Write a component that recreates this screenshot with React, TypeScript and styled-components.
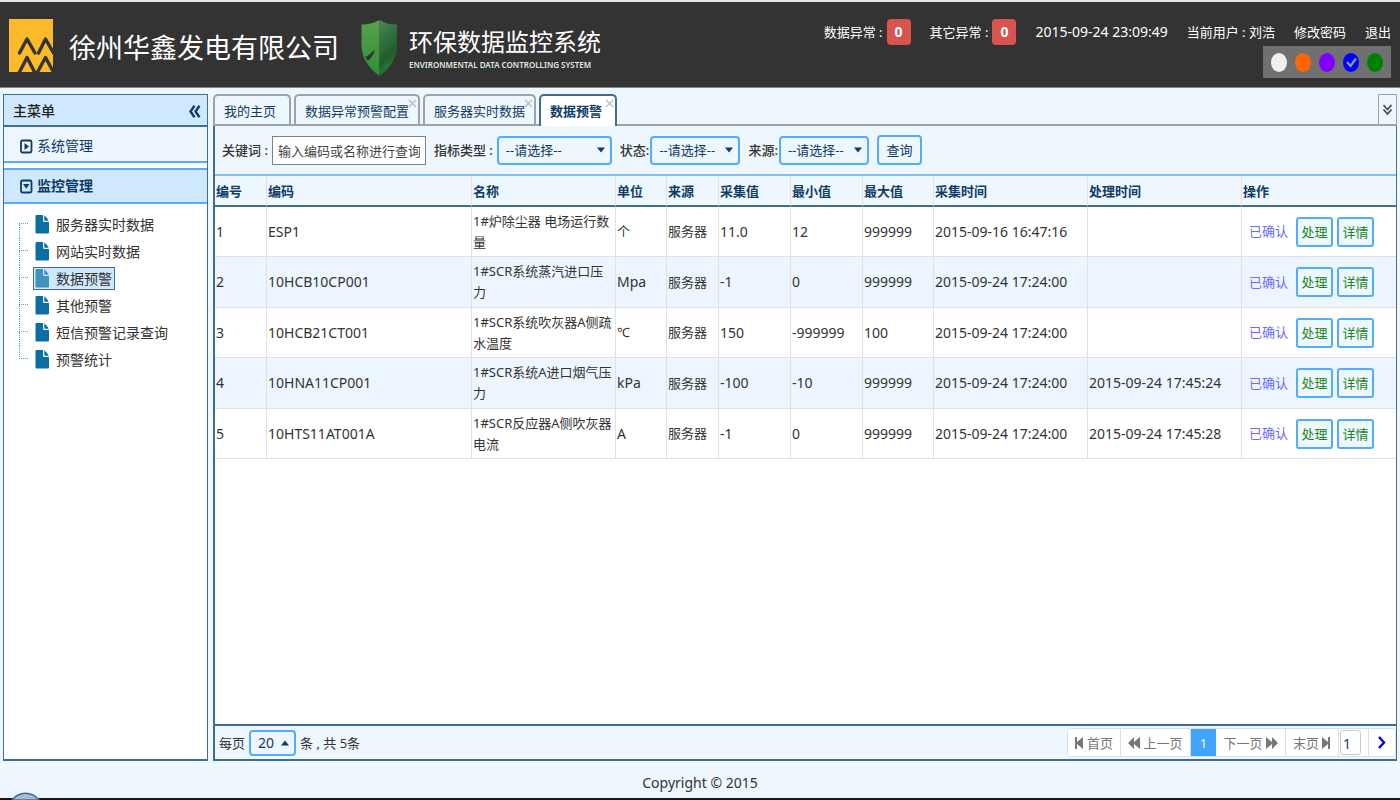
import React, { useState } from "react";
import styled, { createGlobalStyle, css } from "styled-components";

const color = {
  page: "#eef6fe",
  pale: "#edf6fe",
  blue: "#d0e8fe",
  line: "#3f6d94",
  bright: "#52aefc",
  navy: "#0f3c66",
  grey: "#9ba3ab",
  cell: "#dfe1e3",
};

const GlobalStyle = createGlobalStyle`
  *, *::before, *::after { box-sizing: border-box; }
  body { margin: 0; background: ${color.page}; }
  body, button, input, select {
    font-family: "Noto Sans", "Noto Sans CJK SC", sans-serif;
    font-size: 13px;
    line-height: 20px;
    color: #333;
  }
  a { color: inherit; text-decoration: none; }
  h1, h2, h3, p, ul { margin: 0; padding: 0; font-weight: 400; }
  ul { list-style: none; }
`;

const Page = styled.div`
  display: flex;
  flex-direction: column;
  min-height: 100vh;
  overflow: hidden;
`;

const Header = styled.header`
  display: flex;
  justify-content: space-between;
  height: 88px;
  padding-left: 8px;
  background: #333;
  border-top: 2px solid #dfe6e6;
  border-bottom: 1px solid #83878a;
`;

const Brand = styled.div`
  display: flex;
  align-items: center;
  padding-top: 6px;
`;

const CompanyName = styled.h1`
  margin: 0 22px 0 16px;
  font-size: 27px;
  line-height: 40px;
  color: #fff;
  white-space: nowrap;
`;

const SystemName = styled.div`
  display: flex;
  flex-direction: column;
  margin-left: 11px;
  color: #fff;
  white-space: nowrap;
`;

const SystemTitle = styled.h2`
  font-size: 24px;
  line-height: 34px;
`;

const SystemSubtitle = styled.p`
  font-size: 8px;
  line-height: 12px;
  font-weight: 600;
  color: #dfe9df;
`;

const HeaderSide = styled.div`
  display: flex;
  flex-direction: column;
  align-items: flex-end;
  padding: 15px 9px 0 0;
`;

const StatusRow = styled.div`
  display: flex;
  align-items: center;
  gap: 19px;
  height: 29px;
  color: #fff;
  white-space: nowrap;
`;

const Alert = styled.span`
  display: flex;
  align-items: center;
  gap: 4px;
`;

const Badge = styled.b`
  width: 24px;
  height: 26px;
  border-radius: 4px;
  background: #d9534f;
  font-size: 14px;
  line-height: 25px;
  text-align: center;
`;

const Clock = styled.time`
  font-size: 14px;
`;

const Themes = styled.div`
  display: flex;
  align-items: center;
  gap: 8px;
  height: 32px;
  padding: 0 8px;
  background: #707070;
`;

const ThemeDot = styled.label<{ $color: string }>`
  position: relative;
  display: flex;
  width: 16px;
  height: 19px;
  border-radius: 50%;
  background: ${(p) => p.$color};
  input {
    appearance: none;
    width: 16px;
    height: 19px;
    margin: 0;
    border-radius: 50%;
  }
  svg {
    position: absolute;
    inset: 4px 3px;
    pointer-events: none;
  }
`;

const Body = styled.div`
  display: flex;
  flex: 1;
  gap: 5px;
  padding: 6px 3px 0;
`;

const Sidebar = styled.nav`
  flex: 0 0 205px;
  display: flex;
  flex-direction: column;
  background: #fff;
  border: 2px solid ${color.line};
  border-width: 1px 1px 2px;
`;

const SidebarTitle = styled.div`
  display: flex;
  align-items: center;
  justify-content: space-between;
  height: 32px;
  padding: 2px 6px 0 9px;
  background: ${color.blue};
  border-bottom: 2px solid ${color.line};
  font-size: 14px;
  font-weight: 500;
  color: #222;
`;

const IconButton = styled.button`
  display: flex;
  align-items: center;
  justify-content: center;
  padding: 0;
  border: 0;
  background: none;
  cursor: pointer;
`;

const Group = styled.button<{ $open?: boolean }>`
  display: flex;
  align-items: center;
  gap: 4px;
  height: 36px;
  padding: ${(p) => (p.$open ? 0 : 4)}px 15px 0;
  border: 0 solid ${color.bright};
  border-bottom-width: 2px;
  border-top-width: ${(p) => (p.$open ? 2 : 0)}px;
  margin-bottom: ${(p) => (p.$open ? 7 : 5)}px;
  background: ${(p) => (p.$open ? color.blue : color.pale)};
  font-size: 14px;
  font-weight: ${(p) => (p.$open ? 700 : 400)};
  color: ${color.navy};
`;

const Tree = styled.ul`
  padding-left: 15px;
`;

const treeLine = "1px dotted #4fa3cf";

const TreeItem = styled.li`
  position: relative;
  height: 27px;
  padding: 2px 0 2px 14px;
  &::before {
    content: "";
    position: absolute;
    left: 0;
    top: 0;
    width: 9px;
    height: 13px;
    border-left: ${treeLine};
    border-bottom: ${treeLine};
  }
  &:first-child::before { border-left: 0; }
  &:not(:last-child)::after {
    content: "";
    position: absolute;
    left: 0;
    top: 13px;
    bottom: 0;
    border-left: ${treeLine};
  }
`;

const TreeLink = styled.a<{ $active?: boolean }>`
  display: inline-flex;
  align-items: center;
  gap: 7px;
  height: 23px;
  padding: 0 2px 0 1px;
  border: 1px solid transparent;
  font-size: 14px;
  white-space: nowrap;
  svg { color: #0b6fa4; }
  ${(p) =>
    p.$active &&
    css`
      background: ${color.blue};
      border-color: ${color.line};
      svg { color: #3f93bf; }
    `}
`;

const Main = styled.main`
  flex: 1;
  min-width: 0;
  display: flex;
  flex-direction: column;
`;

const TabBar = styled.div`
  display: flex;
  gap: 3px;
  height: 32px;
  border-bottom: 2px solid ${color.grey};
`;

const Tab = styled.div<{ $active?: boolean }>`
  position: relative;
  display: flex;
  min-width: 78px;
  height: ${(p) => (p.$active ? 32 : 30)}px;
  padding-right: 9px;
  border: 2px solid ${(p) => (p.$active ? color.line : color.grey)};
  border-bottom: 0;
  border-radius: 5px 5px 0 0;
  background: ${(p) => (p.$active ? "#fff" : color.page)};
`;

const TabLabel = styled.button<{ $active?: boolean }>`
  height: 28px;
  padding: 1px 0 0 9px;
  border: 0;
  background: none;
  font-weight: ${(p) => (p.$active ? 700 : 400)};
  color: ${color.navy};
  white-space: nowrap;
`;

const TabClose = styled(IconButton)`
  position: absolute;
  top: 3px;
  right: 1px;
  width: 9px;
  height: 9px;
`;

const TabMenu = styled(IconButton)`
  width: 19px;
  height: 30px;
  margin-left: auto;
  border: 1px solid ${color.grey};
  border-bottom: 0;
`;

const Panel = styled.section`
  flex: 1;
  display: flex;
  flex-direction: column;
  background: #fff;
  border: 0 solid ${color.line};
  border-width: 0 1px 2px 2px;
`;

const Filters = styled.form`
  display: flex;
  align-items: center;
  gap: 8px;
  height: 50px;
  padding: 0 7px;
  background: ${color.page};
  border-bottom: 2px solid #7cc0fb;
`;

const Field = styled.label<{ $gap: number }>`
  display: flex;
  align-items: center;
  gap: ${(p) => p.$gap}px;
  font-weight: 500;
  white-space: nowrap;
`;

const TextInput = styled.input`
  width: 154px;
  height: 29px;
  padding: 2px 5px 0;
  border: 1px solid #7d8287;
  background: #fff;
  outline: 0;
  &::placeholder { color: #444; opacity: 1; }
`;

const SelectBox = styled.span<{ $width: number; $height?: number }>`
  position: relative;
  display: inline-flex;
  width: ${(p) => p.$width}px;
  height: ${(p) => p.$height ?? 29}px;
  svg {
    position: absolute;
    right: 7px;
    top: 50%;
    margin-top: -3px;
    pointer-events: none;
  }
`;

const Select = styled.select`
  appearance: none;
  width: 100%;
  padding: 0 7px;
  border: 2px solid ${color.bright};
  border-radius: 4px;
  background: ${color.page};
  color: ${color.navy};
`;

const Button = styled.button<{ $action?: boolean }>`
  width: ${(p) => (p.$action ? 37 : 45)}px;
  height: 30px;
  padding: 0;
  border: 2px solid ${color.bright};
  border-radius: ${(p) => (p.$action ? 3 : 4)}px;
  background: ${color.page};
  color: ${(p) => (p.$action ? "#1b861b" : color.navy)};
`;

const Table = styled.table`
  width: 100%;
  table-layout: fixed;
  border-collapse: separate;
  border-spacing: 0;
  th, td {
    padding: 0 1px;
    border-right: 1px solid ${color.cell};
    text-align: left;
  }
  th:last-child, td:last-child { border-right: 0; }
  th {
    height: 31px;
    background: ${color.page};
    border-bottom: 2px solid ${color.line};
    font-weight: 700;
    color: ${color.navy};
  }
  td {
    height: 50px;
    border-bottom: 1px solid ${color.cell};
    line-height: 21px;
  }
  tbody tr:nth-child(even) { background: ${color.pale}; }
  tbody tr:nth-child(even) td { height: 51px; }
`;

const Value = styled.span`
  font-size: 14px;
  white-space: nowrap;
`;

const Actions = styled.div`
  display: flex;
  align-items: center;
  gap: 4px;
  padding-left: 6px;
`;

const Confirmed = styled.span`
  margin-right: 4px;
  color: #6a6aff;
`;

const PanelFooter = styled.div`
  display: flex;
  align-items: center;
  justify-content: space-between;
  height: 35px;
  margin-top: auto;
  padding: 0 0 0 4px;
  background: ${color.page};
  border-top: 2px solid ${color.line};
`;

const PageSize = styled.div`
  display: flex;
  align-items: center;
  gap: 4px;
  select { font-size: 14px; }
`;

const Pager = styled.div`
  display: flex;
  height: 29px;
  border: 1px solid #dcdfe2;
  border-radius: 4px;
  background: #fff;
  overflow: hidden;
`;

const PagerButton = styled.button<{ $width: number; $current?: boolean }>`
  display: flex;
  align-items: center;
  justify-content: center;
  gap: 3px;
  width: ${(p) => p.$width}px;
  padding: 0;
  border: 0;
  border-right: ${(p) => (p.$current ? 0 : 1)}px solid #dcdfe2;
  background: ${(p) => (p.$current ? "#40a4fc" : "#fff")};
  color: ${(p) => (p.$current ? "#fff" : "#777")};
  white-space: nowrap;
  &:last-child { border-right: 0; }
`;

const PageInputCell = styled.div`
  display: flex;
  align-items: center;
  width: 30px;
  padding-left: 1px;
  border-right: 1px solid #dcdfe2;
`;

const PageInput = styled.input`
  width: 21px;
  height: 25px;
  padding: 2px 2px 0;
  border: 1px solid #ccc;
  border-radius: 3px;
  font-size: 14px;
  color: ${color.navy};
`;

const Copyright = styled.footer`
  position: relative;
  height: 39px;
  padding-top: 12px;
  border-bottom: 2px solid #15171c;
  font-size: 14px;
  text-align: center;
`;

const StartOrb = styled.svg`
  position: absolute;
  left: 11px;
  bottom: -2px;
`;

const LogoMark = styled.svg`
  margin-bottom: 4px;
`;

const CompanyLogo = () => (
  <LogoMark width="45" height="53" viewBox="0 0 45 53" aria-hidden="true">
    <rect x="1" width="44" height="53" fill="#fbba2b" />
    <g fill="none" stroke="#333" strokeWidth="3.400" strokeLinejoin="round">
      <path d="M11.500 34 19 20l8 14" strokeLinecap="round" />
      <path d="M30.500 34 37.500 20l8 14" strokeLinecap="round" />
      <path d="M11 54 19 38.500 27 54M29 54 37.500 38.500 46 54" />
    </g>
  </LogoMark>
);

const Shield = () => (
  <svg width="37" height="57" viewBox="0 0 37 57" aria-hidden="true">
    <defs>
      <linearGradient id="shieldLeft" x1="0" y1="0" x2="0" y2="1">
        <stop offset="0" stopColor="#5aa04f" />
        <stop offset="1" stopColor="#2c9135" />
      </linearGradient>
      <linearGradient id="shieldRight" x1="0" y1="0" x2="0.300" y2="1">
        <stop offset="0" stopColor="#4c8657" />
        <stop offset="0.500" stopColor="#2c6a38" />
        <stop offset="1" stopColor="#1f6129" />
      </linearGradient>
    </defs>
    <path d="M18.500 1C13 4 7 5.500 .5 5.500v21c0 13 8 23 18 30.500z" fill="url(#shieldLeft)" />
    <path d="M18.500 1c5 3 11 4.500 17.500 4.500v21c0 13-7.500 23-17.500 30.500z" fill="url(#shieldRight)" />
    <path d="M18.500 38 36 23v9L18.500 48z" fill="#1d5529" opacity=".45" />
    <path d="M18.500 50 33 40c-3 7-8 12-14.500 17z" fill="#2f8a39" opacity=".4" />
    <path d="M4 38c4-1 6-5 10-7-1 3-2 6-7 11z" fill="#333" />
  </svg>
);

const Arrow = ({ up }: { up?: boolean }) => (
  <svg width="8" height="6" viewBox="0 0 8 6" aria-hidden="true">
    <path d={up ? "M0 5.500h8L4 .5z" : "M0 .5h8L4 5.500z"} fill={color.navy} />
  </svg>
);

const GroupIcon = ({ open }: { open?: boolean }) => (
  <svg width="14" height="15" viewBox="0 0 14 15" aria-hidden="true">
    <rect x="2" y="1.500" width="10.500" height="12" rx="1.500" fill="none" stroke={color.navy} strokeWidth="1.800" />
    <path d={open ? "M4 5h6.500l-3.250 4.800z" : "M5.500 4v7l4.500-3.500z"} fill={color.navy} />
  </svg>
);

const FileIcon = () => (
  <svg width="14" height="19" viewBox="0 0 14 19" aria-hidden="true">
    <path
      d="M1.500 0H8v5.500q0 1.500 1.500 1.500H14v10.500q0 1-1 1H1.500q-1 0-1-1V1q0-1 1-1zM9.300.3q2.700 2.200 4.400 5.400H9.300z"
      fill="currentColor"
    />
  </svg>
);

const Chevrons = ({ down }: { down?: boolean }) => (
  <svg width="13" height="13" viewBox="0 0 13 13" fill="none" aria-hidden="true">
    {down ? (
      <path d="M2.500 2 6.500 6.500 10.500 2M2.500 6.500 6.500 11 10.500 6.500" stroke="#444" strokeWidth="1.600" />
    ) : (
      <path d="M6.500 .8 2.500 6.500l4 5.700M11.500 .8 7.500 6.500l4 5.700" stroke={color.navy} strokeWidth="2.400" />
    )}
  </svg>
);

const Cross = () => (
  <svg width="9" height="9" viewBox="0 0 9 9" aria-hidden="true">
    <path d="M1 1l7 7M8 1 1 8" stroke="#b9bec4" strokeWidth="1.400" />
  </svg>
);

const pagerShapes = {
  first: { w: 9, d: "M0 0h2v5L8 0v12L2 7v5H0z" },
  prev: { w: 12, d: "M6 0v5l6-5v12L6 7v5L0 6z" },
  next: { w: 12, d: "M6 0v5L0 0v12l6-5v5l6-6z" },
  last: { w: 9, d: "M8 0H6v5L0 0v12l6-5v5h2z" },
};

const PagerIcon = ({ kind }: { kind: keyof typeof pagerShapes }) => (
  <svg width={pagerShapes[kind].w} height="12" viewBox={`0 0 ${pagerShapes[kind].w} 12`} aria-hidden="true">
    <path d={pagerShapes[kind].d} fill="#777" />
  </svg>
);

const themes = [
  { name: "白色", value: "#f0f0f0" },
  { name: "橙色", value: "#ff6600" },
  { name: "紫色", value: "#8000ff" },
  { name: "蓝色", value: "#0000ff" },
  { name: "绿色", value: "#008000" },
];

const menu = ["服务器实时数据", "网站实时数据", "数据预警", "其他预警", "短信预警记录查询", "预警统计"];
const tabs = ["我的主页", "数据异常预警配置", "服务器实时数据", "数据预警"];
const widths = [52, 205, 144, 51, 52, 72, 72, 71, 154, 154];
const columns = ["编号", "编码", "名称", "单位", "来源", "采集值", "最小值", "最大值", "采集时间", "处理时间", "操作"];

const rows = [
  ["1", "ESP1", "1#炉除尘器 电场运行数量", "个", "服务器", "11.0", "12", "999999", "2015-09-16 16:47:16", ""],
  ["2", "10HCB10CP001", "1#SCR系统蒸汽进口压力", "Mpa", "服务器", "-1", "0", "999999", "2015-09-24 17:24:00", ""],
  ["3", "10HCB21CT001", "1#SCR系统吹灰器A侧疏水温度", "℃", "服务器", "150", "-999999", "100", "2015-09-24 17:24:00", ""],
  ["4", "10HNA11CP001", "1#SCR系统A进口烟气压力", "kPa", "服务器", "-100", "-10", "999999", "2015-09-24 17:24:00", "2015-09-24 17:45:24"],
  ["5", "10HTS11AT001A", "1#SCR反应器A侧吹灰器电流", "A", "服务器", "-1", "0", "999999", "2015-09-24 17:24:00", "2015-09-24 17:45:28"],
];

const isLatin = (text: string) => /^[\x20-\x7e]+$/.test(text);

const Choice = ({ label, gap, width }: { label: string; gap: number; width: number }) => (
  <Field $gap={gap}>
    {label}
    <SelectBox $width={width}>
      <Select>
        <option>--请选择--</option>
      </Select>
      <Arrow />
    </SelectBox>
  </Field>
);

export default function App() {
  const [theme, setTheme] = useState("蓝色");
  return (
    <Page>
      <GlobalStyle />
      <Header>
        <Brand>
          <CompanyLogo />
          <CompanyName>徐州华鑫发电有限公司</CompanyName>
          <Shield />
          <SystemName>
            <SystemTitle>环保数据监控系统</SystemTitle>
            <SystemSubtitle>ENVIRONMENTAL DATA CONTROLLING SYSTEM</SystemSubtitle>
          </SystemName>
        </Brand>
        <HeaderSide>
          <StatusRow>
            <Alert>数据异常 : <Badge>0</Badge></Alert>
            <Alert>其它异常 : <Badge>0</Badge></Alert>
            <Clock>2015-09-24 23:09:49</Clock>
            <span>当前用户 : 刘浩</span>
            <a href="#password">修改密码</a>
            <a href="#logout">退出</a>
          </StatusRow>
          <Themes>
            {themes.map((t) => (
              <ThemeDot key={t.name} $color={t.value}>
                <input
                  type="radio"
                  name="theme"
                  aria-label={t.name}
                  checked={theme === t.name}
                  onChange={() => setTheme(t.name)}
                />
                {theme === t.name && (
                  <svg width="11" height="11" viewBox="0 0 11 11" aria-hidden="true">
                    <path d="M1 5l3.500 4L10 1.500" fill="none" stroke="#8f9a8c" strokeWidth="2.200" />
                  </svg>
                )}
              </ThemeDot>
            ))}
          </Themes>
        </HeaderSide>
      </Header>

      <Body>
        <Sidebar>
          <SidebarTitle>
            主菜单
            <IconButton aria-label="收起菜单"><Chevrons /></IconButton>
          </SidebarTitle>
          <Group><GroupIcon />系统管理</Group>
          <Group $open><GroupIcon open />监控管理</Group>
          <Tree>
            {menu.map((item) => (
              <TreeItem key={item}>
                <TreeLink href="#menu" $active={item === "数据预警"}>
                  <FileIcon />
                  {item}
                </TreeLink>
              </TreeItem>
            ))}
          </Tree>
        </Sidebar>

        <Main>
          <TabBar>
            {tabs.map((tab, i) => {
              const active = i === tabs.length - 1;
              return (
                <Tab key={tab} $active={active}>
                  <TabLabel $active={active}>{tab}</TabLabel>
                  {i > 0 && <TabClose aria-label={`关闭${tab}`}><Cross /></TabClose>}
                </Tab>
              );
            })}
            <TabMenu aria-label="更多标签"><Chevrons down /></TabMenu>
          </TabBar>

          <Panel>
            <Filters>
              <Field $gap={4}>
                关键词 :
                <TextInput placeholder="输入编码或名称进行查询" />
              </Field>
              <Choice label="指标类型 :" gap={4} width={115} />
              <Choice label="状态:" gap={1} width={90} />
              <Choice label="来源:" gap={1} width={90} />
              <Button type="button">查询</Button>
            </Filters>

            <Table>
              <colgroup>
                {widths.map((w, i) => <col key={i} width={w} />)}
                <col />
              </colgroup>
              <thead>
                <tr>{columns.map((c) => <th key={c} scope="col">{c}</th>)}</tr>
              </thead>
              <tbody>
                {rows.map((row) => (
                  <tr key={row[0]}>
                    {row.map((text, i) => (
                      <td key={i}>{isLatin(text) ? <Value>{text}</Value> : text}</td>
                    ))}
                    <td>
                      <Actions>
                        <Confirmed>已确认</Confirmed>
                        <Button $action>处理</Button>
                        <Button $action>详情</Button>
                      </Actions>
                    </td>
                  </tr>
                ))}
              </tbody>
            </Table>

            <PanelFooter>
              <PageSize>
                每页
                <SelectBox $width={47} $height={26}>
                  <Select aria-label="每页条数" defaultValue="20">
                    <option>20</option>
                  </Select>
                  <Arrow up />
                </SelectBox>
                条 , 共 5条
              </PageSize>
              <Pager>
                <PagerButton $width={53}><PagerIcon kind="first" />首页</PagerButton>
                <PagerButton $width={70}><PagerIcon kind="prev" />上一页</PagerButton>
                <PagerButton $width={25} $current>1</PagerButton>
                <PagerButton $width={70}>下一页<PagerIcon kind="next" /></PagerButton>
                <PagerButton $width={53}>末页<PagerIcon kind="last" /></PagerButton>
                <PageInputCell>
                  <PageInput aria-label="页码" defaultValue="1" />
                </PageInputCell>
                <PagerButton $width={26} aria-label="跳转">
                  <svg width="8" height="13" viewBox="0 0 8 13" aria-hidden="true">
                    <path d="M1 1l5 5.500L1 12" fill="none" stroke="#0000ff" strokeWidth="2.400" />
                  </svg>
                </PagerButton>
              </Pager>
            </PanelFooter>
          </Panel>
        </Main>
      </Body>

      <Copyright>
        Copyright © 2015
        <StartOrb width="29" height="8" viewBox="0 0 29 8" aria-hidden="true">
          <path d="M1 8C8-1 21-1 28 8z" fill="#a9bccd" stroke={color.line} strokeWidth="1.500" />
        </StartOrb>
      </Copyright>
    </Page>
  );
}
